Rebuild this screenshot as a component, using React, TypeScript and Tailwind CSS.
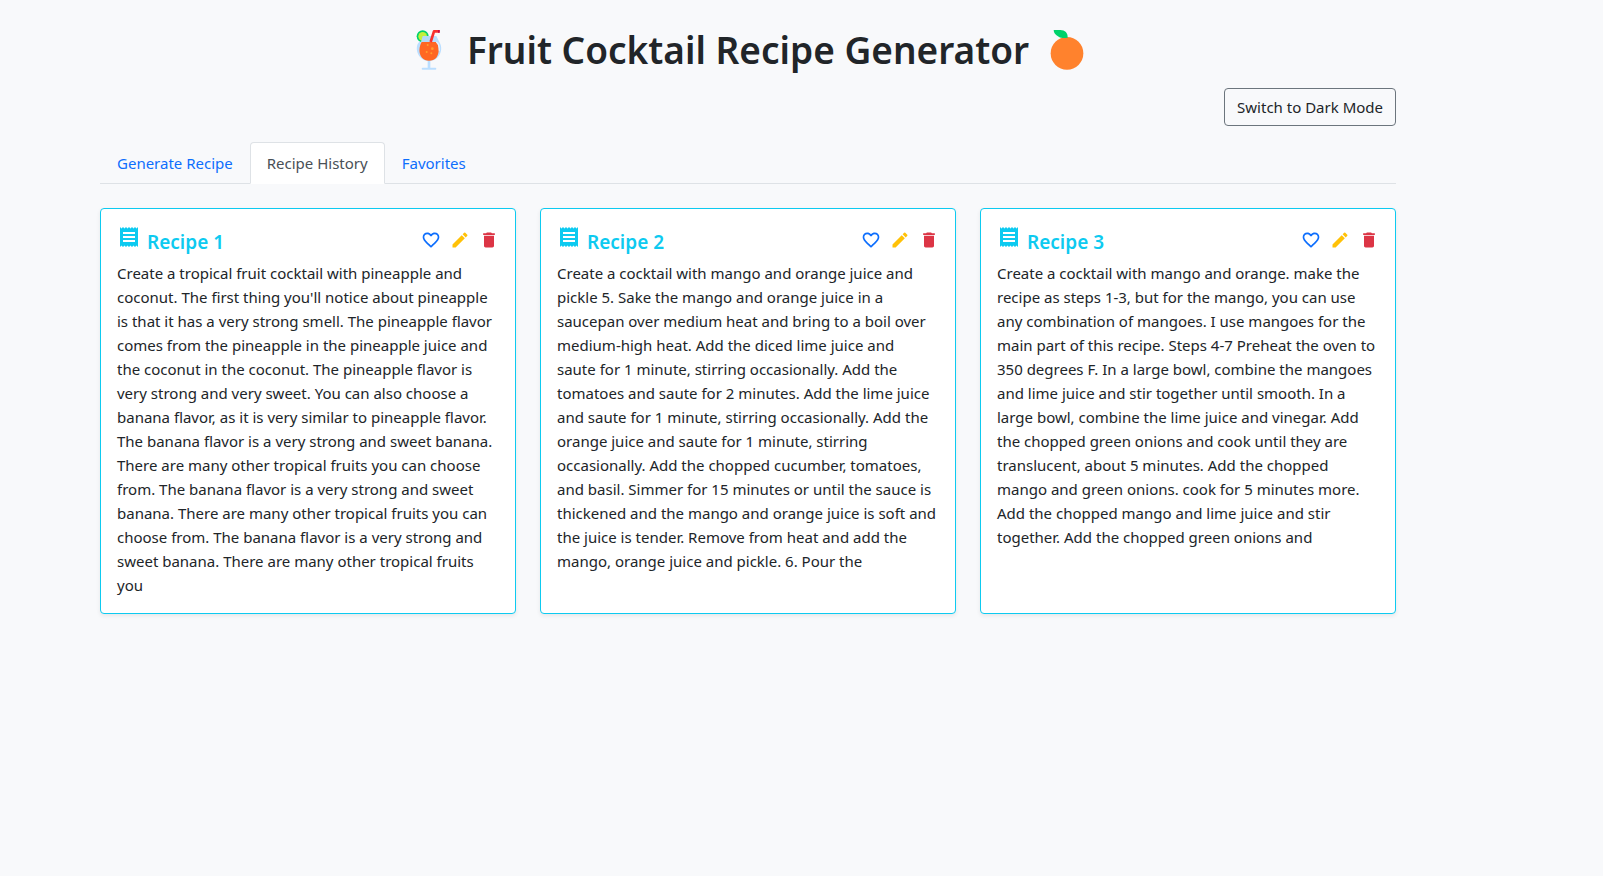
import { useState } from "react";
import { MdDelete, MdEdit, MdFavoriteBorder, MdReceipt } from "react-icons/md";

type Recipe = { id: number; lines: string[] };

const recipes: Recipe[] = [
  {
    id: 1,
    lines: [
      "Create a tropical fruit cocktail with pineapple and",
      "coconut. The first thing you'll notice about pineapple",
      "is that it has a very strong smell. The pineapple flavor",
      "comes from the pineapple in the pineapple juice and",
      "the coconut in the coconut. The pineapple flavor is",
      "very strong and very sweet. You can also choose a",
      "banana flavor, as it is very similar to pineapple flavor.",
      "The banana flavor is a very strong and sweet banana.",
      "There are many other tropical fruits you can choose",
      "from. The banana flavor is a very strong and sweet",
      "banana. There are many other tropical fruits you can",
      "choose from. The banana flavor is a very strong and",
      "sweet banana. There are many other tropical fruits",
      "you",
    ],
  },
  {
    id: 2,
    lines: [
      "Create a cocktail with mango and orange juice and",
      "pickle 5. Sake the mango and orange juice in a",
      "saucepan over medium heat and bring to a boil over",
      "medium-high heat. Add the diced lime juice and",
      "saute for 1 minute, stirring occasionally. Add the",
      "tomatoes and saute for 2 minutes. Add the lime juice",
      "and saute for 1 minute, stirring occasionally. Add the",
      "orange juice and saute for 1 minute, stirring",
      "occasionally. Add the chopped cucumber, tomatoes,",
      "and basil. Simmer for 15 minutes or until the sauce is",
      "thickened and the mango and orange juice is soft and",
      "the juice is tender. Remove from heat and add the",
      "mango, orange juice and pickle. 6. Pour the",
    ],
  },
  {
    id: 3,
    lines: [
      "Create a cocktail with mango and orange. make the",
      "recipe as steps 1-3, but for the mango, you can use",
      "any combination of mangoes. I use mangoes for the",
      "main part of this recipe. Steps 4-7 Preheat the oven to",
      "350 degrees F. In a large bowl, combine the mangoes",
      "and lime juice and stir together until smooth. In a",
      "large bowl, combine the lime juice and vinegar. Add",
      "the chopped green onions and cook until they are",
      "translucent, about 5 minutes. Add the chopped",
      "mango and green onions. cook for 5 minutes more.",
      "Add the chopped mango and lime juice and stir",
      "together. Add the chopped green onions and",
    ],
  },
];

const tabs = ["Generate Recipe", "Recipe History", "Favorites"];

function CocktailIcon() {
  return (
    <svg viewBox="0 0 120 120" className="size-10" aria-hidden="true">
      <path d="M43 18h39l12 24c6 14 2 35-15 46-5 4-12 5-19 5s-14-1-19-5C24 77 20 56 26 42z" fill="#badeff" />
      <path d="M56 90h8v24h-8z" fill="#badeff" />
      <rect x="38" y="113" width="44" height="6" rx="3" fill="#badeff" />
      <circle cx="41" cy="19" r="18" fill="#00d26a" />
      <circle cx="41" cy="19" r="13" fill="#c3ef3c" />
      <path d="M41 18h24v18H36z" fill="#b3d9f7" />
      <path d="M38 36h45c8 14 9 34-1 47-5 6-14 9-22 9s-16-3-21-9c-11-13-9-33-1-47z" fill="#ff6723" />
      <path d="M83 37c8 5 8 15 8 24" fill="none" stroke="#e5f3ff" strokeWidth="4" strokeLinecap="round" />
      <path d="M65 36l10-32h17" fill="none" stroke="#f8312f" strokeWidth="8" strokeLinejoin="round" />
      <path d="M87 0h5v8h-5z" fill="#ca0b4a" />
      <g fill="#ff9f2e">
        <circle cx="56" cy="45" r="3" />
        <circle cx="70" cy="56" r="4" />
        <circle cx="53" cy="66" r="3" />
        <circle cx="67" cy="70" r="3" />
      </g>
    </svg>
  );
}

function TangerineIcon() {
  return (
    <svg viewBox="0 0 120 120" className="size-10" aria-hidden="true">
      <circle cx="60" cy="70" r="49" fill="#ff822d" />
      <path d="M20 0h20c14 0 23 9 22 23-9 2-19 2-27-3C25 15 20 8 20 0z" fill="#00d26a" />
    </svg>
  );
}

function RecipeCard({ recipe }: { recipe: Recipe }) {
  return (
    <article className="rounded border border-[#0dcaf0] bg-white p-4 shadow-[0_2px_4px_rgba(0,0,0,0.075)]">
      <header className="flex justify-between pb-1.5">
        <h2 className="flex gap-1.5 text-[19px] font-semibold text-[#0dcaf0]">
          <MdReceipt className="size-6" aria-hidden="true" />
          <span className="pt-1 leading-[26px]">Recipe {recipe.id}</span>
        </h2>
        <div className="flex items-start gap-[9px] pt-[5px]">
          <button type="button" aria-label={`Favorite recipe ${recipe.id}`} className="text-[#0d6efd]">
            <MdFavoriteBorder className="size-5" />
          </button>
          <button type="button" aria-label={`Edit recipe ${recipe.id}`} className="text-[#ffc107]">
            <MdEdit className="size-5" />
          </button>
          <button type="button" aria-label={`Delete recipe ${recipe.id}`} className="text-[#dc3545]">
            <MdDelete className="size-5" />
          </button>
        </div>
      </header>
      <p className="text-[15px] leading-6 whitespace-pre-line">{recipe.lines.join("\n")}</p>
    </article>
  );
}

export default function App() {
  const [active, setActive] = useState("Recipe History");

  return (
    <div className="min-h-screen bg-[#f8f9fb] pt-6 pr-[107px] font-['Noto_Sans','Open_Sans',sans-serif] text-[#212529]">
      <main className="mx-auto max-w-[1320px] px-3">
        <h1 className="flex items-center justify-center gap-[18px] text-[37px] leading-[52px] font-semibold">
          <CocktailIcon />
          Fruit Cocktail Recipe Generator
          <TangerineIcon />
        </h1>
        <div className="mt-3 mb-4 flex justify-end">
          <button type="button" className="rounded border border-[#6c757d] px-3 py-1.5 text-[15px] leading-6">
            Switch to Dark Mode
          </button>
        </div>
        <nav className="mb-6 flex border-b border-[#dee2e6]" role="tablist">
          {tabs.map((tab) => (
            <button
              key={tab}
              type="button"
              role="tab"
              aria-selected={tab === active}
              onClick={() => setActive(tab)}
              className={
                tab === active
                  ? "-mb-px rounded-t border border-[#dee2e6] border-b-white bg-white px-4 py-2 text-[15px] leading-6 text-[#495057]"
                  : "-mb-px border border-transparent px-4 py-2 text-[15px] leading-6 text-[#0d6efd]"
              }
            >
              {tab}
            </button>
          ))}
        </nav>
        <section className="grid grid-cols-3 gap-6">
          {recipes.map((recipe) => (
            <RecipeCard key={recipe.id} recipe={recipe} />
          ))}
        </section>
      </main>
    </div>
  );
}
